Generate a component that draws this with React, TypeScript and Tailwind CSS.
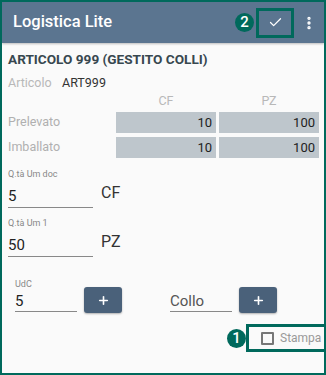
import { Check, EllipsisVertical, Plus } from "lucide-react"

function Badge({ n }: { n: string }) {
  return (
    <div className="w-[19px] h-[19px] rounded-full bg-[#00695c] text-white text-[15px] font-medium flex items-center justify-center leading-none">
      {n}
    </div>
  )
}

function Cell({ v }: { v: string }) {
  return (
    <div className="h-[21px] bg-[#bec6cc] flex items-center justify-end pr-[4px] text-[13px] text-[#222]">
      {v}
    </div>
  )
}

export default function App() {
  return (
    <div
      className="w-[326px] h-[375px] border-2 border-[#00695c] bg-[#fafafa] flex flex-col overflow-hidden"
      style={{ fontFamily: "Roboto, 'Liberation Sans', sans-serif" }}
    >
      {/* header */}
      <div className="h-[41px] bg-[#5b7590] flex items-center pl-[11px] shadow-[0_1px_2px_rgba(0,0,0,0.25)]">
        <span className="text-white text-[16.5px] font-medium flex-1">Logistica Lite</span>
        <Badge n="2" />
        <div className="ml-[2px] w-[38px] h-[30px] border-[3px] border-[#00695c] flex items-center justify-center">
          <Check size={15} strokeWidth={2} className="text-white" />
        </div>
        <div className="w-[30px] flex items-center justify-center">
          <EllipsisVertical size={16} strokeWidth={3} className="text-white" />
        </div>
      </div>

      <div className="px-[6px] pt-[8px] flex flex-col">
        <div className="text-[13.6px] font-bold text-[#37474f] leading-[16px]">ARTICOLO 999 (GESTITO COLLI)</div>
        <div className="flex text-[12.5px] mt-[8px] leading-[16px]">
          <span className="text-[#b8b8b8] w-[54px]">Articolo</span>
          <span className="text-[#333]">ART999</span>
        </div>

        <div className="grid grid-cols-[105px_100px_100px] gap-x-[3px] gap-y-[4px] mt-[3px] text-[12.5px]">
          <div />
          <div className="text-center text-[#b8b8b8] leading-[14px]">CF</div>
          <div className="text-center text-[#b8b8b8] leading-[14px]">PZ</div>
          <div className="text-[#b0b0b0] flex items-center h-[21px]">Prelevato</div>
          <Cell v="10" />
          <Cell v="100" />
          <div className="text-[#b0b0b0] flex items-center h-[21px]">Imballato</div>
          <Cell v="10" />
          <Cell v="100" />
        </div>

        <div className="text-[9px] text-[#888] mt-[10px] leading-[12px]">Q.tà Um doc</div>
        <div className="flex items-end mt-[2px]">
          <div className="w-[85px] border-b border-[#888] text-[15px] text-[#222] pb-[1px] leading-[20px]">5</div>
          <span className="ml-[8px] text-[16px] text-[#333] leading-[22px] mb-[4px]">CF</span>
        </div>

        <div className="text-[9px] text-[#888] mt-[9px] leading-[12px]">Q.tà Um 1</div>
        <div className="flex items-end mt-[2px]">
          <div className="w-[85px] border-b border-[#888] text-[15px] text-[#222] pb-[1px] leading-[20px]">50</div>
          <span className="ml-[8px] text-[16px] text-[#333] leading-[22px] mb-[4px]">PZ</span>
        </div>

        <div className="pl-[7px] mt-[21px] flex items-end">
          <div className="flex flex-col w-[62px]">
            <span className="text-[9px] text-[#888] leading-[12px]">UdC</span>
            <div className="border-b border-[#888] text-[15px] text-[#222] leading-[20px] mt-[1px]">5</div>
          </div>
          <button className="ml-[7px] w-[38px] h-[26px] rounded-[3px] bg-[#4a617a] flex items-center justify-center shadow-[0_1px_2px_rgba(0,0,0,0.3)] mb-[-1px]">
            <Plus size={13} strokeWidth={3} className="text-white" />
          </button>
          <div className="ml-[48px] w-[62px] border-b border-[#888] text-[15px] text-[#555] leading-[20px]">Collo</div>
          <button className="ml-[7px] w-[38px] h-[26px] rounded-[3px] bg-[#4a617a] flex items-center justify-center shadow-[0_1px_2px_rgba(0,0,0,0.3)] mb-[-1px]">
            <Plus size={13} strokeWidth={3} className="text-white" />
          </button>
        </div>
      </div>

      <div className="flex justify-end items-center mt-[12px]">
        <Badge n="1" />
        <div className="w-[78px] h-[28px] border-[3px] border-r-0 border-[#00695c] flex items-center pl-[12px]">
          <div className="w-[13px] h-[13px] border-2 border-[#777] rounded-[1px]" />
          <span className="ml-[6px] text-[12px] text-[#999]">Stampa</span>
        </div>
      </div>
    </div>
  )
}
